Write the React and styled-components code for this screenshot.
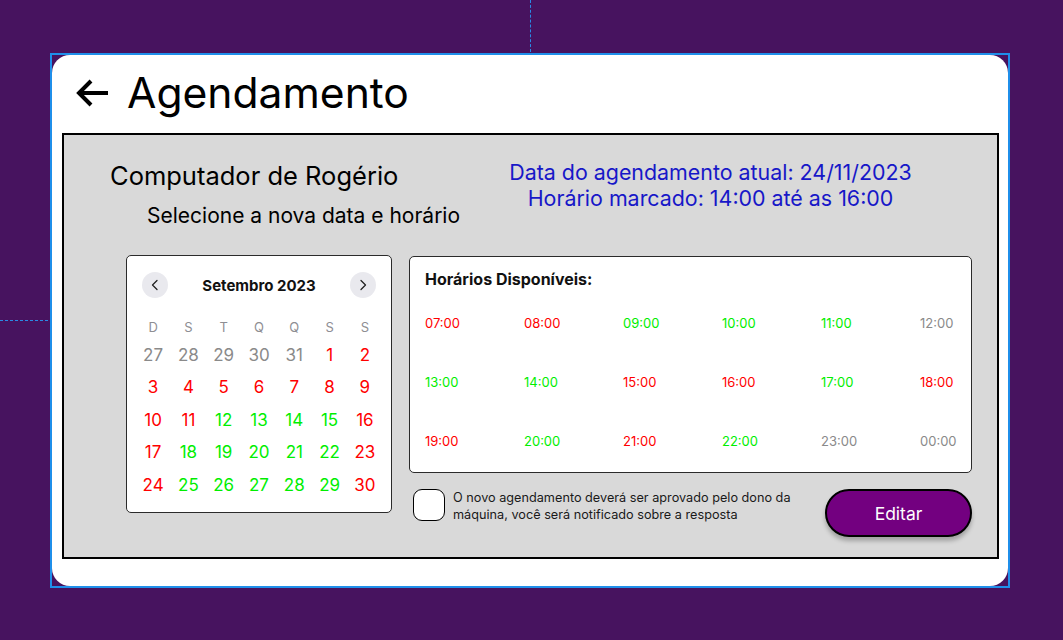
import React from "react";
import styled, { createGlobalStyle } from "styled-components";

const GlobalStyle = createGlobalStyle`
  html, body {
    margin: 0;
    padding: 0;
    background: #47135f;
    font-family: Inter, "Noto Sans", sans-serif;
  }
  * { box-sizing: border-box; }
`;

const Page = styled.div`
  position: relative;
  width: 1063px;
  height: 640px;
  padding: 53px 0 0 50px;
  overflow: hidden;
`;

const Guide = styled.div`
  position: absolute;
  ${({ $vertical }) =>
    $vertical
      ? `left: 530px; top: 0; height: 52px; border-left: 1px dashed #2a8ae6;`
      : `left: 0; top: 320px; width: 48px; border-top: 1px dashed #2a8ae6;`}
`;

const Frame = styled.div`
  width: 960px;
  height: 535px;
  border: 2px solid #1f8fea;
`;

const Card = styled.div`
  height: 100%;
  background: #fff;
  border-radius: 18px;
  display: flex;
  flex-direction: column;
`;

const Header = styled.header`
  height: 78px;
  display: flex;
  align-items: center;
  gap: 17px;
  padding: 0 0 4px 24px;
`;

const BackIcon = styled.svg`
  width: 34px;
  height: 30px;
  margin-top: 2px;
`;

const Title = styled.h1`
  margin: 0;
  font-size: 42.6px;
  font-weight: 400;
  color: #000;
`;

const Panel = styled.section`
  margin: 0 9px 0 10px;
  height: 426px;
  background: #d9d9d9;
  border: 2px solid #000;
  display: flex;
  flex-direction: column;
`;

const TopRow = styled.div`
  height: 120px;
  display: flex;
`;

const Intro = styled.div`
  width: 430px;
  padding: 26px 0 0 46px;
`;

const Machine = styled.h2`
  margin: 0;
  font-size: 25.5px;
  line-height: 30px;
  font-weight: 400;
  color: #000;
`;

const Hint = styled.p`
  margin: 12px 0 0 37px;
  font-size: 21px;
  line-height: 25px;
  color: #000;
`;

const Current = styled.div`
  width: 433px;
  padding-top: 24px;
  text-align: center;
  color: #1717c8;
  font-size: 21.4px;
  line-height: 26px;
`;

const BottomRow = styled.div`
  display: flex;
  align-items: flex-start;
  gap: 17px;
  padding-left: 62px;
`;

const Calendar = styled.div`
  width: 266px;
  height: 258px;
  background: #fff;
  border: 1px solid #2b2b2b;
  border-radius: 5px;
  padding: 16px 8px 0;
`;

const CalHead = styled.div`
  display: flex;
  align-items: center;
  justify-content: space-between;
  padding: 0 7px;
`;

const NavButton = styled.button`
  width: 26px;
  height: 26px;
  border-radius: 50%;
  border: none;
  background: #e9e9ee;
  padding: 0;
  display: flex;
  align-items: center;
  justify-content: center;
  color: #222;
`;

const Month = styled.div`
  font-size: 15px;
  font-weight: 700;
  color: #111;
`;

const DayGrid = styled.div`
  display: grid;
  grid-template-columns: repeat(7, 35.3px);
  grid-auto-rows: 32.5px;
  margin-top: 1.5px;
  justify-content: center;
`;

const WeekGrid = styled(DayGrid)`
  grid-auto-rows: 20px;
  margin-top: 19px;
`;

const WeekDay = styled.div`
  display: flex;
  align-items: center;
  justify-content: center;
  font-size: 13px;
  color: #8e8e93;
`;

const palette = {
  red: "#ff0000",
  green: "#00ee00",
  gray: "#8a8a8a",
};

const Day = styled.div`
  display: flex;
  align-items: center;
  justify-content: center;
  font-size: 17px;
  color: ${({ $tone }) => palette[$tone]};
`;

const RightCol = styled.div`
  width: 563px;
  margin-top: 1px;
`;

const Slots = styled.div`
  height: 217px;
  background: #fff;
  border: 1px solid #2b2b2b;
  border-radius: 5px;
  padding: 12px 0 0 15px;
`;

const SlotsTitle = styled.h3`
  margin: 0;
  font-size: 16px;
  line-height: 20px;
  font-weight: 700;
  color: #111;
`;

const SlotGrid = styled.div`
  display: grid;
  grid-template-columns: repeat(5, 99px) auto;
  grid-auto-rows: 59px;
  margin-top: 4.5px;
`;

const Slot = styled.div`
  display: flex;
  align-items: center;
  font-size: 13px;
  color: ${({ $tone }) => palette[$tone]};
`;

const Footer = styled.div`
  display: flex;
  align-items: flex-start;
  margin-top: 16px;
  padding-left: 4px;
`;

const Check = styled.div`
  width: 32px;
  height: 32px;
  flex: none;
  background: #fff;
  border: 1px solid #000;
  border-radius: 9px;
`;

const Notice = styled.p`
  margin: 0 0 0 8px;
  font-size: 12.7px;
  line-height: 17px;
  color: #1a1a1a;
`;

const EditButton = styled.button`
  margin-left: auto;
  width: 147px;
  height: 48px;
  border: 2px solid #000;
  border-radius: 24px;
  background: #730080;
  color: #fff;
  font-family: Inter, sans-serif;
  font-size: 17.5px;
  box-shadow: 0 4px 4px rgba(0, 0, 0, 0.25);
`;

const weekDays = ["D", "S", "T", "Q", "Q", "S", "S"];

const days = [
  [27, "gray"], [28, "gray"], [29, "gray"], [30, "gray"], [31, "gray"], [1, "red"], [2, "red"],
  [3, "red"], [4, "red"], [5, "red"], [6, "red"], [7, "red"], [8, "red"], [9, "red"],
  [10, "red"], [11, "red"], [12, "green"], [13, "green"], [14, "green"], [15, "green"], [16, "red"],
  [17, "red"], [18, "green"], [19, "green"], [20, "green"], [21, "green"], [22, "green"], [23, "red"],
  [24, "red"], [25, "green"], [26, "green"], [27, "green"], [28, "green"], [29, "green"], [30, "red"],
];

const slots = [
  ["07:00", "red"], ["08:00", "red"], ["09:00", "green"], ["10:00", "green"], ["11:00", "green"], ["12:00", "gray"],
  ["13:00", "green"], ["14:00", "green"], ["15:00", "red"], ["16:00", "red"], ["17:00", "green"], ["18:00", "red"],
  ["19:00", "red"], ["20:00", "green"], ["21:00", "red"], ["22:00", "green"], ["23:00", "gray"], ["00:00", "gray"],
];

function Chevron({ left }) {
  return (
    <svg width="12" height="12" viewBox="0 0 12 12">
      <path
        d={left ? "M8 1.5 L3.5 6 L8 10.5" : "M4 1.5 L8.5 6 L4 10.5"}
        fill="none"
        stroke="currentColor"
        strokeWidth="1.3"
        strokeLinecap="round"
        strokeLinejoin="round"
      />
    </svg>
  );
}

export default function App() {
  return (
    <Page>
      <GlobalStyle />
      <Guide $vertical />
      <Guide />
      <Frame>
        <Card>
          <Header>
            <BackIcon viewBox="0 0 34 30">
              <path d="M3 15 H32 M15 3 L3 15 L15 27" fill="none" stroke="#000" strokeWidth="4" strokeLinejoin="miter" />
            </BackIcon>
            <Title>Agendamento</Title>
          </Header>
          <Panel>
            <TopRow>
              <Intro>
                <Machine>Computador de Rogério</Machine>
                <Hint>Selecione a nova data e horário</Hint>
              </Intro>
              <Current>
                <div>Data do agendamento atual: 24/11/2023</div>
                <div>Horário marcado: 14:00 até as 16:00</div>
              </Current>
            </TopRow>
            <BottomRow>
              <Calendar>
                <CalHead>
                  <NavButton aria-label="anterior"><Chevron left /></NavButton>
                  <Month>Setembro 2023</Month>
                  <NavButton aria-label="próximo"><Chevron /></NavButton>
                </CalHead>
                <WeekGrid>
                  {weekDays.map((d, i) => (
                    <WeekDay key={i}>{d}</WeekDay>
                  ))}
                </WeekGrid>
                <DayGrid>
                  {days.map(([n, tone], i) => (
                    <Day key={i} $tone={tone}>{n}</Day>
                  ))}
                </DayGrid>
              </Calendar>
              <RightCol>
                <Slots>
                  <SlotsTitle>Horários Disponíveis:</SlotsTitle>
                  <SlotGrid>
                    {slots.map(([t, tone]) => (
                      <Slot key={t} $tone={tone}>{t}</Slot>
                    ))}
                  </SlotGrid>
                </Slots>
                <Footer>
                  <Check />
                  <Notice>
                    O novo agendamento deverá ser aprovado pelo dono da
                    <br />
                    máquina, você será notificado sobre a resposta
                  </Notice>
                  <EditButton>Editar</EditButton>
                </Footer>
              </RightCol>
            </BottomRow>
          </Panel>
        </Card>
      </Frame>
    </Page>
  );
}
